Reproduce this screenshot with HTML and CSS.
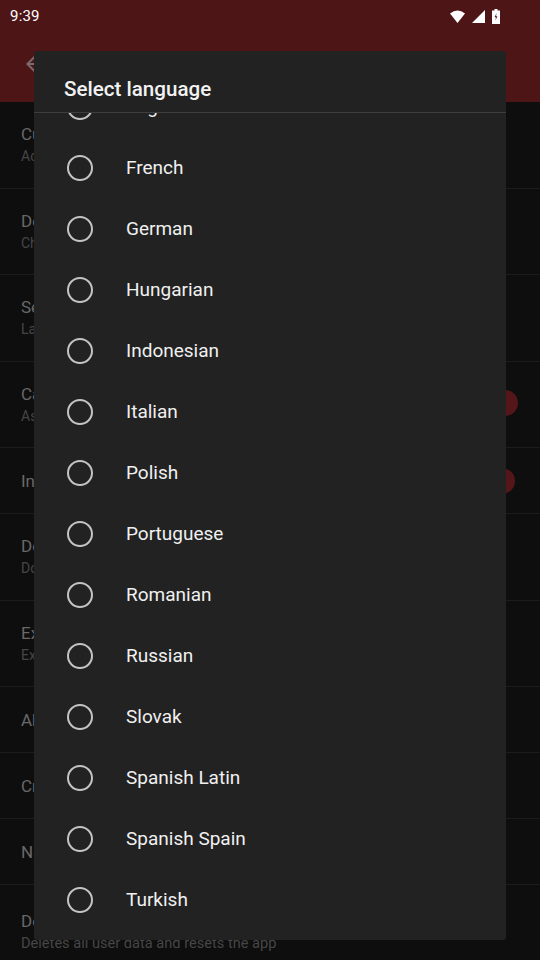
FILE: index.html
```html
<!DOCTYPE html>
<html>
<head>
<meta charset="utf-8">
<link rel="stylesheet" href="styles.css">
</head>
<body>
<div class="screen">
  <header class="top">
    <div class="status">
      <span class="time">9:39</span>
      <div class="sicons">
        <svg width="15" height="13" viewBox="0 0 15 13"><path d="M0 3.5 Q7.5 -2.5 15 3.5 L7.5 13 Z" fill="#fff"/></svg>
        <svg width="13" height="13" viewBox="0 0 13 13"><path d="M13 0 V13 H0 Z" fill="#fff"/></svg>
        <svg width="8" height="15" viewBox="0 0 8 15"><path d="M2.5 0 H5.5 V1.5 H8 V15 H0 V1.5 H2.5 Z" fill="#fff"/><path d="M4.6 4 L2.6 8.2 H4 L3.4 11.5 L5.4 7.2 H4 Z" fill="#4e1517"/></svg>
      </div>
    </div>
    <div class="appbar">
      <svg class="back" width="16" height="16" viewBox="0 0 16 16"><path d="M16 7 H3.8 L9.4 1.4 L8 0 L0 8 L8 16 L9.4 14.6 L3.8 9 H16 Z" fill="#7d6b6b"/></svg>
    </div>
  </header>
  <main class="settings">
    <div class="row two"><div class="t">Currency</div><div class="s">Active currency: USD</div></div>
    <div class="row two"><div class="t">Default account</div><div class="s">Choose the default account</div></div>
    <div class="row two"><div class="t">Select language</div><div class="s">Language: English</div></div>
    <div class="row two tog"><div class="txt"><div class="t">Calculator</div><div class="s">Ask before saving</div></div><span class="knob"></span></div>
    <div class="row one tog"><div class="txt"><div class="t">Include future</div></div><span class="knob k2"></span></div>
    <div class="row two"><div class="t">Download backup</div><div class="s">Download data from file</div></div>
    <div class="row two"><div class="t">Export data</div><div class="s">Export data to file</div></div>
    <div class="row one"><div class="t">About</div></div>
    <div class="row one"><div class="t">Credits</div></div>
    <div class="row one"><div class="t">Notifications</div></div>
    <div class="row two last"><div class="t">Delete data</div><div class="s">Deletes all user data and resets the app</div></div>
  </main>

  <div class="dialog">
    <div class="dtitle">Select language</div>
    <div class="dlist">
      <div class="opt first"><span class="radio"></span><span class="lbl">English</span></div>
      <div class="opt"><span class="radio"></span><span class="lbl">French</span></div>
      <div class="opt"><span class="radio"></span><span class="lbl">German</span></div>
      <div class="opt"><span class="radio"></span><span class="lbl">Hungarian</span></div>
      <div class="opt"><span class="radio"></span><span class="lbl">Indonesian</span></div>
      <div class="opt"><span class="radio"></span><span class="lbl">Italian</span></div>
      <div class="opt"><span class="radio"></span><span class="lbl">Polish</span></div>
      <div class="opt"><span class="radio"></span><span class="lbl">Portuguese</span></div>
      <div class="opt"><span class="radio"></span><span class="lbl">Romanian</span></div>
      <div class="opt"><span class="radio"></span><span class="lbl">Russian</span></div>
      <div class="opt"><span class="radio"></span><span class="lbl">Slovak</span></div>
      <div class="opt"><span class="radio"></span><span class="lbl">Spanish Latin</span></div>
      <div class="opt"><span class="radio"></span><span class="lbl">Spanish Spain</span></div>
      <div class="opt"><span class="radio"></span><span class="lbl">Turkish</span></div>
    </div>
  </div>
</div>
</body>
</html>
```

FILE: styles.css
```css
* { box-sizing: border-box; }
html, body { margin: 0; padding: 0; background: #0e0e0e; }
body { font-family: Roboto, "Noto Sans", sans-serif; }
.screen {
  position: relative;
  width: 540px;
  height: 960px;
  overflow: hidden;
  background: #0e0e0e;
}
.top { background: #4e1517; height: 102px; }
.status {
  height: 32px;
  display: flex;
  align-items: center;
  justify-content: space-between;
  padding: 0 40px 0 10px;
}
.time { color: #fff; font-size: 15px; letter-spacing: 0.2px; }
.sicons { display: flex; align-items: center; gap: 7px; padding-top: 1px; }
.appbar { height: 70px; display: flex; align-items: center; padding: 0 0 6px 26px; }
.back { display: block; }

.settings { display: flex; flex-direction: column; }
.row {
  border-bottom: 1px solid #1c1c1c;
  padding: 0 22px 0 21px;
  display: flex;
  flex-direction: column;
  justify-content: center;
}
.row.two { height: 86.5px; }
.row.one { height: 66px; }
.row.last { border-bottom: none; height: 80px; padding-top: 12px; }
.row.tog { flex-direction: row; align-items: center; justify-content: space-between; }
.t { color: #686868; font-size: 17px; line-height: 22px; }
.s { color: #464646; font-size: 14px; line-height: 20px; margin-top: 1px; }
.row.last .s { font-size: 14.6px; }
.knob {
  width: 26px; height: 26px; border-radius: 50%;
  background: #541618;
  margin-right: 0;
  margin-top: -2px;
}
.knob.k2 { margin-right: 3px; margin-top: 0; }

.dialog {
  position: absolute;
  left: 34px;
  top: 51px;
  width: 472px;
  height: 889px;
  background: #222222;
  border-radius: 3px;
  display: flex;
  flex-direction: column;
  overflow: hidden;
}
.dtitle {
  height: 62px;
  flex: none;
  padding: 26px 0 0 30px;
  color: #f2f2f2;
  font-size: 20.6px;
  font-weight: 500;
  line-height: 24px;
  border-bottom: 1px solid #3e3e3e;
}
.dlist { flex: 1; overflow: hidden; }
.opt {
  height: 61px;
  display: flex;
  align-items: center;
}
.opt.first { margin-top: -37px; }
.radio {
  width: 26px;
  height: 26px;
  border-radius: 50%;
  border: 2.3px solid #c4c4c4;
  margin-left: 33px;
  flex: none;
}
.lbl {
  margin-left: 33px;
  color: #f0f0f0;
  font-size: 19px;
}
```
